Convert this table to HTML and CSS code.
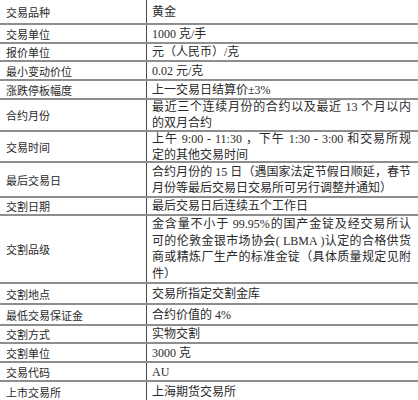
FILE: index.html
```html
<!DOCTYPE html>
<html lang="zh">
<head>
<meta charset="utf-8">
<link rel="stylesheet" href="styles.css">
</head>
<body>
<div class="sheet">
  <div class="row head"><div class="k">交易品种</div><div class="v">黄金</div></div>
  <div class="row"><div class="k">交易单位</div><div class="v">1000 克/手</div></div>
  <div class="row short"><div class="k">报价单位</div><div class="v">元（人民币）/克</div></div>
  <div class="row"><div class="k">最小变动价位</div><div class="v">0.02 元/克</div></div>
  <div class="row"><div class="k">涨跌停板幅度</div><div class="v">上一交易日结算价±3%</div></div>
  <div class="row two"><div class="k">合约月份</div><div class="v"><span class="ln fill">最近三个连续月份的合约以及最近 13 个月以内</span><span class="ln">的双月合约</span></div></div>
  <div class="row two tight"><div class="k">交易时间</div><div class="v"><span class="ln fill">上午 9:00 - 11:30 ，下午 1:30 - 3:00 和交易所规</span><span class="ln">定的其他交易时间</span></div></div>
  <div class="row two loose"><div class="k">最后交易日</div><div class="v"><span class="ln fill">合约月份的 15 日（遇国家法定节假日顺延，春节</span><span class="ln">月份等最后交易日交易所可另行调整并通知）</span></div></div>
  <div class="row short"><div class="k">交割日期</div><div class="v">最后交易日后连续五个工作日</div></div>
  <div class="row four"><div class="k">交割品级</div><div class="v"><span class="ln fill">金含量不小于 99.95%的国产金锭及经交易所认</span><span class="ln fill">可的伦敦金银市场协会( LBMA )认定的合格供货</span><span class="ln fill">商或精炼厂生产的标准金锭（具体质量规定见附</span><span class="ln">件）</span></div></div>
  <div class="row roomy"><div class="k">交割地点</div><div class="v">交易所指定交割金库</div></div>
  <div class="row roomy"><div class="k">最低交易保证金</div><div class="v">合约价值的 4%</div></div>
  <div class="row short"><div class="k">交割方式</div><div class="v">实物交割</div></div>
  <div class="row"><div class="k">交割单位</div><div class="v">3000 克</div></div>
  <div class="row"><div class="k">交易代码</div><div class="v">AU</div></div>
  <div class="row last"><div class="k">上市交易所</div><div class="v">上海期货交易所</div></div>
</div>
</body>
</html>
```
FILE: styles.css
```css
html, body {
  margin: 0;
  padding: 0;
  background: #fff;
}

.sheet {
  width: 418px;
  color: #2a2a2a;
}

.row {
  display: flex;
  box-sizing: border-box;
  height: 19px;
  border-bottom: 2px solid #8e8e8e;
}

.row.head { height: 25px; }
.row.short { height: 18px; }
.row.roomy { height: 21px; }
.row.two { height: 32px; }
.row.two.tight { height: 31px; }
.row.two.loose { height: 35px; }
.row.four { height: 68px; }
.row.last { height: 20px; border-bottom: none; }

.k {
  width: 147px;
  flex: none;
  box-sizing: border-box;
  padding-left: 6px;
  border-right: 1px solid #4a4a4a;
  display: flex;
  align-items: center;
  font-family: "Noto Sans CJK SC", sans-serif;
  font-size: 11px;
  line-height: 16px;
}

.v {
  flex: 1;
  min-width: 0;
  padding: 0 7px 0 5px;
  display: flex;
  flex-direction: column;
  justify-content: center;
  font-family: "Liberation Serif", "Noto Sans CJK SC", serif;
  font-size: 12px;
  line-height: 16px;
  white-space: nowrap;
}

.row.four .v { line-height: 16.5px; }

.ln {
  display: block;
}

.ln.fill {
  text-align: justify;
  text-align-last: justify;
}
```
